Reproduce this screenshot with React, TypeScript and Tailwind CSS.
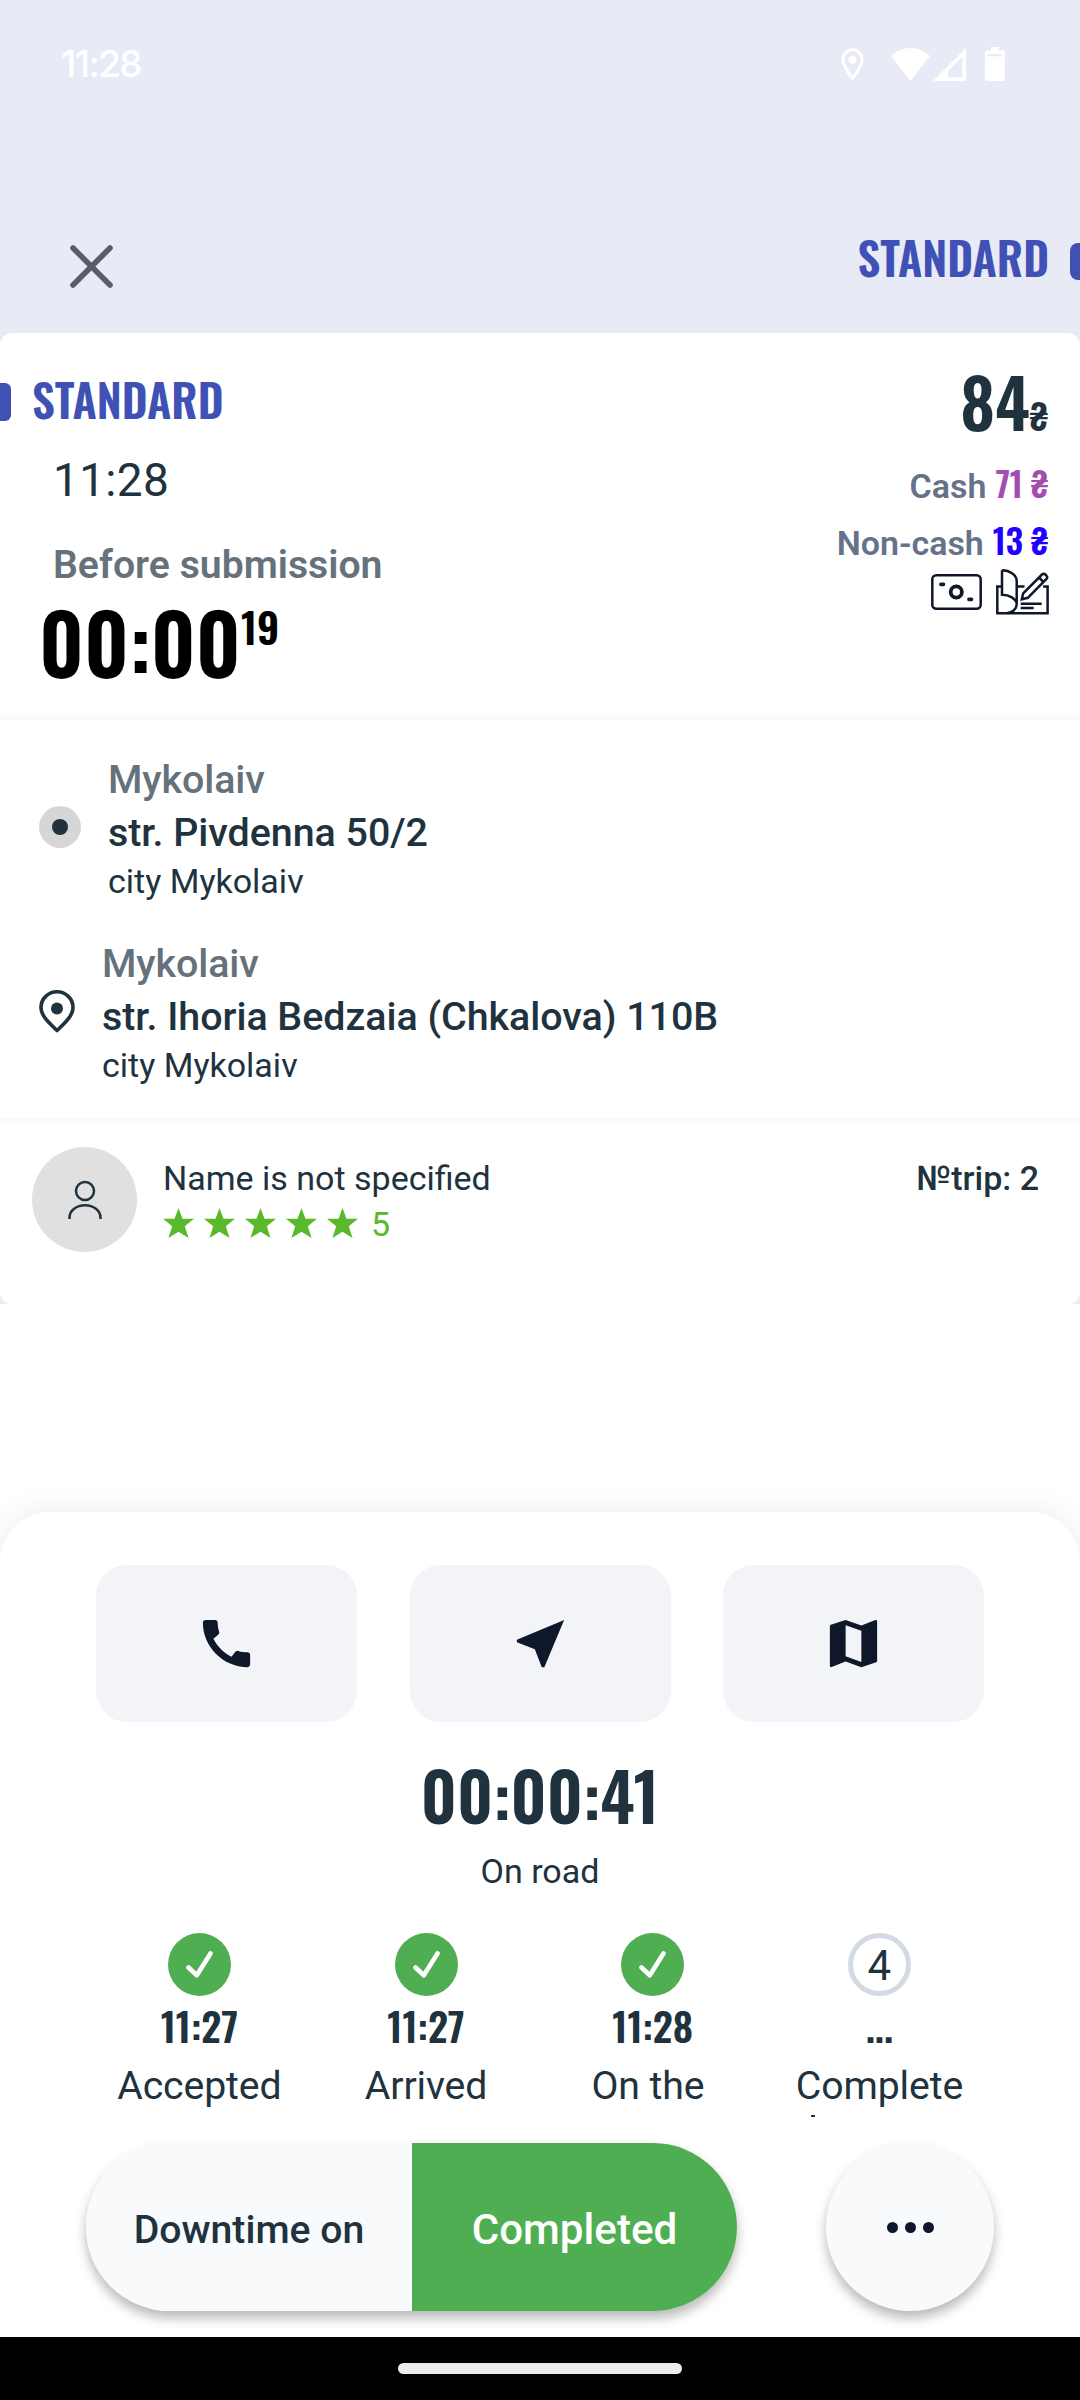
import React from 'react';
import { MdCall, MdNearMe, MdMap } from 'react-icons/md';

// --- Status bar icons ---
const StatusIcons = () => (
  <div className="flex items-center text-white">
    <svg className="w-[23px] h-[33px]" viewBox="0 0 23 33" fill="none">
      <path d="M11.5 30.5C8 26 2 18 2 11.3a9.5 9.5 0 0 1 19 0C21 18 15 26 11.5 30.5z" stroke="currentColor" strokeWidth={3} />
      <circle cx="11.5" cy="11.7" r="4.2" fill="currentColor" />
    </svg>
    <svg className="w-[39px] h-[33px] ml-[27px]" viewBox="0 0 39 33" fill="currentColor">
      <path d="M0 8C5 3 12 0 19.5 0S34 3 39 8L19.5 33z" />
    </svg>
    <svg className="w-[33px] h-[33px] ml-[3px]" viewBox="0 0 33 33" fill="currentColor">
      <path fillRule="evenodd" d="M33 0v33H0zM29.3 9L15 23.2v6.1h14.3z" />
    </svg>
    <svg className="w-[20px] h-[34px] ml-[19px]" viewBox="0 0 20 34" fill="currentColor">
      <path fillRule="evenodd" d="M6 0h8v3.5h4a2 2 0 0 1 2 2V32a2 2 0 0 1-2 2H2a2 2 0 0 1-2-2V5.5a2 2 0 0 1 2-2h4zM3.3 7v2.3h13.4V7z" />
    </svg>
  </div>
);

const CloseIcon = () => (
  <svg className="w-[43px] h-[43px]" viewBox="0 0 43 43" fill="none" stroke="#5a5d68" strokeWidth={5.6} strokeLinecap="round">
    <path d="M3 3l37 37M40 3L3 40" />
  </svg>
);

// --- Payment icons ---
const BanknoteIcon = () => (
  <svg className="w-[51px] h-[36px]" viewBox="0 0 51 36" fill="none" stroke="#0f172a">
    <rect x="1.3" y="1.3" width="48.4" height="33.4" rx="4" strokeWidth={2.5} />
    <circle cx="25.3" cy="18" r="5.6" strokeWidth={3.8} />
    <path d="M10 10.3h2.4M38 25.3h2.4" strokeWidth={3.8} strokeLinecap="round" />
  </svg>
);

const ChequeIcon = () => (
  <svg className="w-[53px] h-[46px]" viewBox="0 0 53 46" fill="none" stroke="#0f172a" strokeWidth={2.5}>
    <path d="M6 17.5H1.3V44.2h50.3V17.5h-4.5M21 17.5h7.5" />
    <path d="M6 1.3v24.4C14 25.7 19.5 30 20.7 34M6 1.3c8 0 14.7 5 14.7 10.5V35c0 4.5-4 9-9.5 9" />
    <path d="M25.8 30.3l1.4-6L46 5.5a2.5 2.5 0 0 1 3.3 0l1.2 1.2a2.5 2.5 0 0 1 0 3.3L31.8 28.8zM43 8.5l4.6 4.6" />
    <path d="M24.7 34.7h21M24.7 38.9h13" />
  </svg>
);

const PinIcon = () => (
  <svg className="w-[36px] h-[43px]" viewBox="0 0 36 43" fill="none">
    <path d="M18 40.5C12 34.5 2 26.5 2 17.5a16 15.7 0 0 1 32 0c0 9-10 17-16 23z" stroke="#20323e" strokeWidth={3.6} strokeLinejoin="round" />
    <circle cx="18" cy="18.5" r="6" fill="#20323e" />
  </svg>
);

const PersonIcon = () => (
  <svg className="w-[34px] h-[40px]" viewBox="0 0 34 40" fill="none" stroke="#20323e" strokeWidth={2.5}>
    <circle cx="17" cy="11" r="9" />
    <path d="M1.5 39v-1.5C1.5 30.5 8.5 25.2 17 25.2s15.5 5.3 15.5 12.3V39" />
  </svg>
);

const StarIcon = () => (
  <svg className="w-[31px] h-[30px]" viewBox="0 0 31 30" fill="#5ab92a">
    <path d="M15.5 0l4 10.8H31l-9.2 7.4L25.6 30l-10.1-6.2L5.4 30l3.8-11.8L0 10.8h11.5z" />
  </svg>
);

const CheckIcon = () => (
  <svg className="w-[27px] h-[27px]" viewBox="0 0 27 27" fill="none" stroke="white" strokeWidth={4.6} strokeLinecap="round" strokeLinejoin="round">
    <path d="M2.5 16.5l8.3 7.7L24.5 2.5" />
  </svg>
);

// --- Data ---
const payments = [
  { label: 'Cash', amount: '71 ₴', color: 'text-[#a34db0]' },
  { label: 'Non-cash', amount: '13 ₴', color: 'text-[#2200ff]' },
];

const actions = [MdCall, MdNearMe, MdMap];

const steps = [
  { time: '11:27', label: 'Accepted', done: true },
  { time: '11:27', label: 'Arrived', done: true },
  { time: '11:28', label: 'On the ', done: true },
  { time: '...', label: 'Complete', done: false },
];

interface AddressProps {
  district: string;
  street: string;
  city: string;
}

const Address = ({ district, street, city }: AddressProps) => (
  <div>
    <p className="text-[39.4px] leading-[53px] tracking-[-0.1px] font-medium text-[#65727c]">{district}</p>
    <p className="text-[39.4px] leading-[53px] tracking-[-0.03px] font-medium">{street}</p>
    <p className="text-[34px] leading-[44px]">{city}</p>
  </div>
);

const OrderCard = () => (
  <div className="h-[971px] bg-white rounded-[12px]">
    <div className="flex justify-between h-[382px] pt-[36px] pr-[32px]">
      <div>
        <div className="flex items-center h-[60px]">
          <div className="w-[11px] h-[38px] mt-[6px] rounded-r-[6px] bg-[#3f51b5]" />
          <p className="ml-[21px] font-['Oswald','Roboto_Condensed'] font-semibold text-[45.1px] leading-[60px] text-[#3f51b5]">STANDARD</p>
        </div>
        <p className="mt-[21px] ml-[53px] text-[46px] leading-[60px] tracking-[0.3px] font-[450]">11:28</p>
        <p className="mt-[31px] ml-[53px] text-[39.2px] leading-[48px] font-semibold text-[#65727c]">Before submission</p>
        <div className="flex items-start mt-[12px] ml-[39px] font-['Oswald','Roboto_Condensed'] font-semibold text-black">
          <span className="text-[83px] leading-[80px]">00:00</span>
          <span className="mt-[-3px] text-[42px] leading-[56px]">19</span>
        </div>
      </div>

      <div className="flex flex-col items-end">
        <div className="flex items-baseline h-[64px] font-['Oswald','Roboto_Condensed'] font-semibold leading-[64px]">
          <span className="text-[67.5px]">84</span>
          <span className="text-[36px]">₴</span>
        </div>
        <div className="flex flex-col mt-[21px]">
          {payments.map((item) => (
            <div key={item.label} className="flex items-baseline justify-end gap-[9px] h-[57px] leading-[57px]">
              <span className="text-[34px] font-semibold text-[#66728a]">{item.label}</span>
              <span className={`font-['Oswald','Roboto_Condensed'] font-semibold text-[34px] tracking-[-0.2px] ${item.color}`}>{item.amount}</span>
            </div>
          ))}
        </div>
        <div className="flex items-center gap-[14px] mt-[1px] mr-[-1px]">
          <BanknoteIcon />
          <ChequeIcon />
        </div>
      </div>
    </div>

    {/* Route */}
    <div className="flex flex-col gap-[34px] h-[403px] pt-[33px] pl-[39px] border-t-[5px] border-[#f8fafc]">
      <div className="flex">
        <div className="flex items-center justify-center w-[42px] h-[42px] mt-[53px] mr-[27px] rounded-full bg-[#d6d6d6]">
          <div className="w-[16px] h-[16px] rounded-full bg-[#20323e]" />
        </div>
        <Address district="Mykolaiv" street="str. Pivdenna 50/2" city="city Mykolaiv" />
      </div>
      <div className="flex">
        <div className="mt-[53px] mr-[27px]">
          <PinIcon />
        </div>
        <Address district="Mykolaiv" street="str. Ihoria Bedzaia (Chkalova) 110B" city="city Mykolaiv" />
      </div>
    </div>

    {/* Passenger */}
    <div className="flex pt-[26px] pl-[32px] pr-[41px] border-t-[3px] border-[#f8fafc]">
      <div className="flex items-center justify-center w-[105px] h-[105px] rounded-full bg-[#e0e0e0]">
        <PersonIcon />
      </div>
      <div className="ml-[26px] mt-[9px] text-[34px]">
        <p className="leading-[44px]">Name is not specified</p>
        <div className="flex items-center gap-[10px] h-[46px] text-[#5ab92a]">
          {[1, 2, 3, 4, 5].map((n) => (
            <StarIcon key={n} />
          ))}
          <span className="ml-[3px] pt-[3px]">5</span>
        </div>
      </div>
      <p className="ml-auto mt-[9px] text-[34px] leading-[44px] font-medium">№trip: 2</p>
    </div>
  </div>
);

const Steps = () => (
  <div className="flex mt-[40px] ml-[86px] h-[184px] overflow-hidden">
    {steps.map((step, index) => (
      <div key={index} className="flex flex-col items-center w-[226.7px]">
        {step.done ? (
          <div className="flex items-center justify-center w-[63px] h-[63px] rounded-full bg-[#4fae52]">
            <CheckIcon />
          </div>
        ) : (
          <div className="flex items-center justify-center w-[63px] h-[63px] pt-[2px] rounded-full border-[5px] border-[#d3dae6] text-[42px] leading-[50px]">
            {index + 1}
          </div>
        )}
        <p className="mt-[7px] h-[44px] font-['Oswald','Roboto_Condensed'] font-semibold text-[39.4px] leading-[44px]">{step.time}</p>
        <p className="mt-[15px] text-[39.2px] leading-[48px] tracking-[-0.1px] whitespace-pre">{step.label}</p>
        {!step.done && <div className="w-[4px] h-[2px] mt-[5px] mr-[132px] bg-[#20323e]" />}
      </div>
    ))}
  </div>
);

const BottomSheet = () => (
  <div className="h-[825px] mt-[208px] pt-[53px] bg-white rounded-t-[50px] shadow-[0_0_32px_rgba(0,0,0,0.09)]">
    <div className="flex gap-[52.5px] pl-[96px]">
      {actions.map((Icon, index) => (
        <button key={index} className="flex items-center justify-center w-[261px] h-[157px] rounded-[31px] bg-[#f2f4f8] text-[#0f172a]">
          <Icon size={63} />
        </button>
      ))}
    </div>

    <p className="mt-[37px] text-center font-['Oswald','Roboto_Condensed'] font-semibold text-[66.6px] leading-[70px]">00:00:41</p>
    <p className="mt-[20px] text-center text-[34px] leading-[44px]">On road</p>

    <Steps />

    <div className="flex mt-[26px] pl-[86px] gap-[89px]">
      <div className="flex w-[651px] h-[168px] rounded-full overflow-hidden font-medium shadow-[0_7px_12px_rgba(0,0,0,0.28)]">
        <button className="w-[326px] pt-[5px] bg-[#f8fafc] text-[39.2px] leading-[48px]">Downtime on</button>
        <button className="flex-1 pt-[5px] bg-[#4fae52] text-[42.2px] leading-[50px] text-white">Completed</button>
      </div>
      <button className="flex items-center justify-center gap-[7px] w-[168px] h-[168px] rounded-full bg-[#f8fafc] shadow-[0_7px_12px_rgba(0,0,0,0.28)]">
        <span className="w-[11px] h-[11px] rounded-full bg-[#0f172a]" />
        <span className="w-[11px] h-[11px] rounded-full bg-[#0f172a]" />
        <span className="w-[11px] h-[11px] rounded-full bg-[#0f172a]" />
      </button>
    </div>
  </div>
);

export default function App() {
  return (
    <div className="w-[1080px] h-[2400px] overflow-hidden bg-white font-['Roboto',sans-serif] text-[#20323e]">
      <div className="bg-[#e8eaf6]">
        <div className="flex items-center justify-between h-[128px] pl-[61px] pr-[75px]">
          <span className="font-['Inter'] font-medium text-[37px] tracking-[-1.6px] text-white">11:28</span>
          <StatusIcons />
        </div>
        <div className="flex items-start h-[205px] pl-[70px]">
          <div className="mt-[117px]">
            <CloseIcon />
          </div>
          <p className="ml-auto mt-[99px] font-['Oswald','Roboto_Condensed'] font-semibold text-[45.1px] leading-[60px] text-[#3f51b5]">STANDARD</p>
          <div className="w-[10px] h-[37px] mt-[115px] ml-[21px] rounded-l-[8px] bg-[#3f51b5]" />
        </div>
        <OrderCard />
      </div>

      <BottomSheet />

      <div className="flex justify-center h-[63px] pt-[26px] bg-black">
        <div className="w-[284px] h-[11px] rounded-full bg-[#ebebeb]" />
      </div>
    </div>
  );
}
